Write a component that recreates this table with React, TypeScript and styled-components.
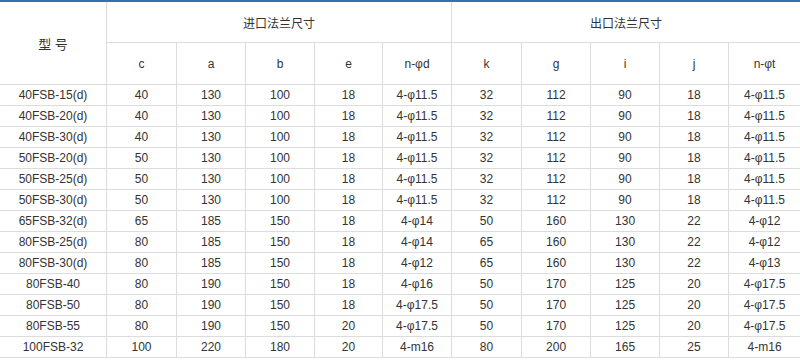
import React from 'react';
import styled, { createGlobalStyle } from 'styled-components';

interface Row {
  model: string;
  values: Array<string>;
}

const rows: Array<Row> = [
  { model: '40FSB-15(d)', values: ['40', '130', '100', '18', '4-φ11.5', '32', '112', '90', '18', '4-φ11.5'] },
  { model: '40FSB-20(d)', values: ['40', '130', '100', '18', '4-φ11.5', '32', '112', '90', '18', '4-φ11.5'] },
  { model: '40FSB-30(d)', values: ['40', '130', '100', '18', '4-φ11.5', '32', '112', '90', '18', '4-φ11.5'] },
  { model: '50FSB-20(d)', values: ['50', '130', '100', '18', '4-φ11.5', '32', '112', '90', '18', '4-φ11.5'] },
  { model: '50FSB-25(d)', values: ['50', '130', '100', '18', '4-φ11.5', '32', '112', '90', '18', '4-φ11.5'] },
  { model: '50FSB-30(d)', values: ['50', '130', '100', '18', '4-φ11.5', '32', '112', '90', '18', '4-φ11.5'] },
  { model: '65FSB-32(d)', values: ['65', '185', '150', '18', '4-φ14', '50', '160', '130', '22', '4-φ12'] },
  { model: '80FSB-25(d)', values: ['80', '185', '150', '18', '4-φ14', '65', '160', '130', '22', '4-φ12'] },
  { model: '80FSB-30(d)', values: ['80', '185', '150', '18', '4-φ12', '65', '160', '130', '22', '4-φ13'] },
  { model: '80FSB-40', values: ['80', '190', '150', '18', '4-φ16', '50', '170', '125', '20', '4-φ17.5'] },
  { model: '80FSB-50', values: ['80', '190', '150', '18', '4-φ17.5', '50', '170', '125', '20', '4-φ17.5'] },
  { model: '80FSB-55', values: ['80', '190', '150', '20', '4-φ17.5', '50', '170', '125', '20', '4-φ17.5'] },
  { model: '100FSB-32', values: ['100', '220', '180', '20', '4-m16', '80', '200', '165', '25', '4-m16'] },
];

const subHeads = ['c', 'a', 'b', 'e', 'n-φd', 'k', 'g', 'i', 'j', 'n-φt'];
const colWidths = [107, 70, 69, 69, 68, 69, 70, 69, 69, 69, 71];

const GlobalStyle = createGlobalStyle`
  body {
    margin: 0;
    background: #fff;
    font-family: "Liberation Sans", Arial, "Noto Sans CJK SC", sans-serif;
  }
`;

const Wrapper = styled.div`
  width: 800px;
  border-top: 2px solid #3170b2;
`;

const Table = styled.table`
  width: 800px;
  table-layout: fixed;
  border-collapse: separate;
  border-spacing: 0;
  color: #333;
  font-size: 12px;
`;

const Cell = styled.td<{ rowHeight: number; last?: boolean; big?: boolean }>`
  box-sizing: border-box;
  height: ${props => props.rowHeight}px;
  padding: 0;
  text-align: center;
  vertical-align: middle;
  border-bottom: 1px solid #dcdcdc;
  border-right: ${props => (props.last ? 'none' : '1px solid #dcdcdc')};
  font-size: ${props => (props.big ? '13px' : '12px')};
  white-space: nowrap;
`;

function App() {
  return (
    <Wrapper>
      <GlobalStyle />
      <Table>
        <colgroup>
          {colWidths.map((w, i) => (
            <col key={i} style={{ width: w }} />
          ))}
        </colgroup>
        <tbody>
          <tr>
            <Cell rowHeight={41} rowSpan={2} big>型&nbsp;号</Cell>
            <Cell rowHeight={41} colSpan={5}>进口法兰尺寸</Cell>
            <Cell rowHeight={41} colSpan={5} last>出口法兰尺寸</Cell>
          </tr>
          <tr>
            {subHeads.map((h, i) => (
              <Cell key={h} rowHeight={42} last={i === subHeads.length - 1}>{h}</Cell>
            ))}
          </tr>
          {rows.map((row, index) => (
            <tr key={index}>
              <Cell rowHeight={21}>{row.model}</Cell>
              {row.values.map((v, i) => (
                <Cell key={i} rowHeight={21} last={i === row.values.length - 1}>{v}</Cell>
              ))}
            </tr>
          ))}
        </tbody>
      </Table>
    </Wrapper>
  );
}

export default App;
